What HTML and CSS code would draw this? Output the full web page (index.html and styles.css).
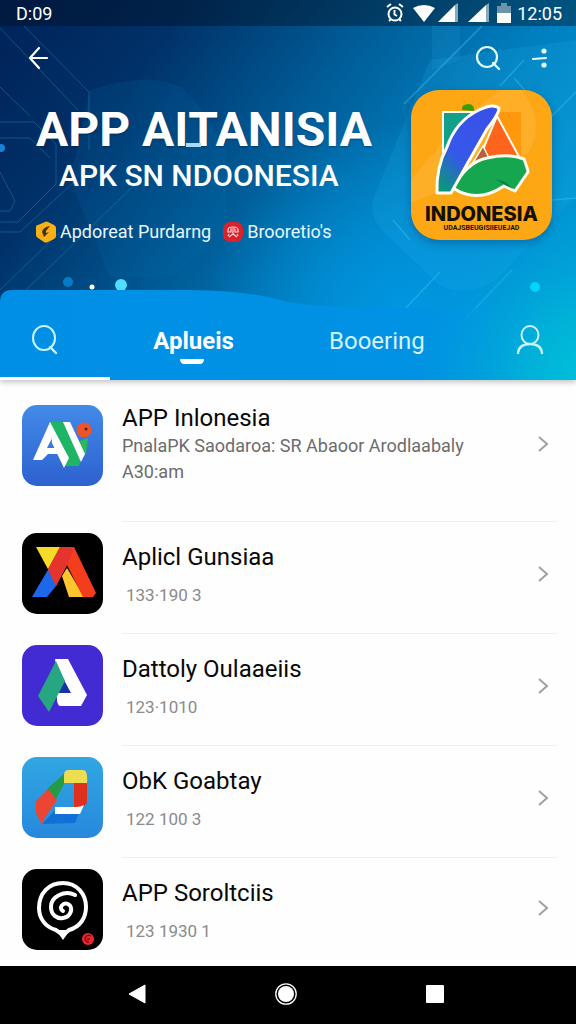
FILE: index.html
```html
<!DOCTYPE html>
<html lang="id">
<head>
  <meta charset="utf-8">
  <meta name="viewport" content="width=device-width, initial-scale=1">
  <title>APP Indonesia</title>
  <link rel="stylesheet" href="styles.css">
</head>
<body>
  <header class="header">
    <svg class="backdrop" viewBox="0 0 576 380" preserveAspectRatio="none" aria-hidden="true">
      <defs>
        <linearGradient id="sky" x1="0" y1="0.1" x2="1" y2="0.6">
          <stop offset="0" stop-color="#00245a"/>
          <stop offset="0.22" stop-color="#003168"/>
          <stop offset="0.5" stop-color="#005d98"/>
          <stop offset="0.75" stop-color="#0080c0"/>
          <stop offset="1" stop-color="#0098d6"/>
        </linearGradient>
        <radialGradient id="glow" gradientUnits="userSpaceOnUse" cx="410" cy="330" r="210">
          <stop offset="0" stop-color="#0098e4"/>
          <stop offset="0.4" stop-color="#0094de" stop-opacity="0.7"/>
          <stop offset="1" stop-color="#0090d8" stop-opacity="0"/>
        </radialGradient>
        <radialGradient id="teal" gradientUnits="userSpaceOnUse" cx="600" cy="380" r="180">
          <stop offset="0" stop-color="#00c6dc"/>
          <stop offset="0.4" stop-color="#00b8d8" stop-opacity="0.8"/>
          <stop offset="1" stop-color="#00a0dc" stop-opacity="0"/>
        </radialGradient>
        <linearGradient id="panel" x1="0" y1="0" x2="1" y2="0">
          <stop offset="0" stop-color="#008fe6"/>
          <stop offset="0.7" stop-color="#0092e4"/>
          <stop offset="1" stop-color="#0096de" stop-opacity="0"/>
        </linearGradient>
      </defs>
      <rect width="576" height="380" fill="url(#sky)"/>
      <rect width="576" height="380" fill="url(#glow)"/>
      <path d="M90 90Q150 70 182 88Q200 104 226 148V210Q226 222 216 234L184 268Q174 277 164 277H110L70 180Z" fill="#0077b5" opacity="0.14"/>
      <path d="M430 60L376 192Q366 212 382 230L440 286Q470 300 500 276L576 196V40Z" fill="#25b4ea" opacity="0.16"/>
      <path d="M432 26V70L460 60V26Z" fill="#39b5ec" opacity="0.12"/>
      <g fill="none" stroke="#2187bd" stroke-width="1" opacity="0.45">
        <path d="M24 26L89 92V150"/>
        <path d="M0 28L78 110M0 87L30 116"/>
        <path d="M0 122H34L56 144V184L18 222H0"/>
        <path d="M0 138H30L50 158M0 172L15 201L10 211H0"/>
        <path d="M0 232H20L76 180M26 290L150 170M0 290L60 232"/>
      </g>
      <g fill="none" stroke="#38c4f3" stroke-width="1.500" opacity="0.45">
        <path d="M482 26L404 104M576 92L550 118M552 200L576 198"/>
        <path d="M524 60L500 86M514 78L530 96M393 220L410 240"/>
        <path d="M440 272L402 312M512 270L466 318"/>
      </g>
      <circle cx="1" cy="148" r="4" fill="#1a80d4"/>
      <circle cx="68" cy="282" r="5" fill="#087bc7"/>
      <circle cx="92" cy="287" r="2.500" fill="#fff"/>
      <circle cx="121" cy="285" r="6" fill="#50ddff"/>
      <path d="M0 302Q0 290 12 290H190Q250 291 280 300Q310 308 390 308H576V380H0Z" fill="url(#panel)"/>
      <rect width="576" height="380" fill="url(#teal)"/>
      <circle cx="535" cy="287" r="5" fill="#00d4fc"/>
    </svg>

    <div class="statusbar">
      <span>D:09</span>
      <span class="status-icons">
        <svg width="106" height="22" viewBox="0 0 106 22" aria-hidden="true">
          <circle cx="10" cy="12" r="6.500" fill="none" stroke="#fff" stroke-width="2"/>
          <path d="M2 5L6 2M18 5L14 2M4 19L6 17M16 19L14 17M9.500 8V12.500L12 14" fill="none" stroke="#fff" stroke-width="2"/>
          <path d="M28 6Q39 0 50 6L39 20Z" fill="#fff"/>
          <path d="M53 20L70 3V20Z" fill="#fff"/>
          <path d="M70 3L73 1V20H70Z" fill="#86a9bd"/>
          <path d="M83 20L101 3V20Z" fill="#fff"/>
          <path d="M101 3L104 1V20H101Z" fill="#86a9bd"/>
        </svg>
        <svg width="14" height="20" viewBox="0 0 14 20" aria-hidden="true">
          <path d="M4 0H10V3H14V10H0V3H4Z" fill="#6d93aa"/>
          <path d="M0 10H14V20H0Z" fill="#fff"/>
        </svg>
        <span>12:05</span>
      </span>
    </div>

    <div class="toolbar">
      <button class="icon-button" aria-label="Back">
        <svg width="24" height="24" viewBox="0 0 24 24"><path d="M12 2L3 12L12 22M3 12H20" fill="none" stroke="#fff" stroke-width="2.200" stroke-linecap="round" stroke-linejoin="round"/></svg>
      </button>
      <div class="toolbar-actions">
        <button class="icon-button" aria-label="Search">
          <svg width="26" height="26" viewBox="0 0 26 26"><circle cx="12" cy="12" r="10" fill="none" stroke="#e4fbff" stroke-width="2.200"/><path d="M18 18L24 24" stroke="#e4fbff" stroke-width="2.400" stroke-linecap="round"/></svg>
        </button>
        <button class="icon-button" aria-label="More">
          <svg width="18" height="22" viewBox="0 0 18 22"><path d="M2 12L15 11" stroke="#e4fbff" stroke-width="2" stroke-linecap="round"/><circle cx="13" cy="4" r="2.600" fill="#e4fbff"/><circle cx="13" cy="18" r="2.600" fill="#e4fbff"/></svg>
        </button>
      </div>
    </div>

    <div class="hero">
      <div class="hero-text">
        <h1>APP A<span class="notch">I</span>TANISIA</h1>
        <h2>APK SN NDOONESIA</h2>
        <div class="badges">
          <span class="badge">
            <svg width="20" height="22" viewBox="0 0 20 22" aria-hidden="true"><path d="M9 1Q10 0 12 1L18 4Q20 5 20 7V15Q20 17 18 18L12 21Q10 22 8 21L2 17Q0 16 0 14V6Q0 4 2 4Z" fill="#fbb015"/><path d="M14 5Q7 6 6 11L8 16L13 11L10 12L10 10Z" fill="#41351b"/></svg>
            Apdoreat Purdarng
          </span>
          <span class="badge">
            <svg width="20" height="20" viewBox="0 0 20 20" aria-hidden="true"><rect width="20" height="20" rx="7" fill="#d9222b"/><path d="M5 8Q5 5 10 5Q15 5 15 8V10H12V7M5 8V10H8V7H12M10 8V12L6 15M10 12L14 15M6 12L5 14M14 12L15 14" fill="none" stroke="#ffd8dc" stroke-width="1.200"/></svg>
            Brooretio's
          </span>
        </div>
      </div>
      <div class="logo">
        <svg viewBox="0 0 141 114" aria-hidden="true">
          <path d="M0 90L50 30L90 0H110Q135 30 118 62L90 80L0 112Z" fill="#ffc45a" opacity="0.3"/>
          <path d="M80 22H110V68L80 40Z" fill="#ff980c"/>
          <path d="M32 22H66L50 62H32Z" fill="#13a08b" stroke="#fffdf0" stroke-width="2"/>
          <path d="M51 20Q50 14 58 14Q64 15 63 21Z" fill="#3a9e0c"/>
          <path d="M86 26L113 76H65Z" fill="#ff641d" stroke="#fffdf0" stroke-width="2"/>
          <path d="M72 56L82 76H60Z" fill="#b8603a" stroke="#fffdf0" stroke-width="1.500"/>
          <defs><linearGradient id="leaf" x1="0.8" y1="0" x2="0.1" y2="1"><stop offset="0" stop-color="#3950e8"/><stop offset="0.6" stop-color="#3658ea"/><stop offset="1" stop-color="#079b72"/></linearGradient></defs>
          <path d="M42 98Q56 72 76 68Q98 63 113 69Q117 80 117 82L104 101L93 96Q66 114 42 98Z" fill="#16a650" stroke="#fffdf0" stroke-width="3" stroke-linejoin="round"/>
          <path d="M84 89L96 96L102 99L94 92Z" fill="#087f3d"/>
          <path d="M26 103Q25 77 36 57Q45 31 68 20Q82 13 88 18Q88 24 76 39L55 76L40 103Z" fill="url(#leaf)" stroke="#fffdf0" stroke-width="3" stroke-linejoin="round"/>
        </svg>
        <strong>INDONESIA</strong>
        <small>UDAJSBEUGISIIEUEJAD</small>
      </div>
    </div>

    <nav class="tabs">
      <button class="icon-button" aria-label="Search apps">
        <svg width="28" height="30" viewBox="0 0 28 30"><ellipse cx="14" cy="13" rx="11" ry="12" fill="none" stroke="#c8f5ff" stroke-width="2"/><path d="M20 22L26 28" stroke="#c8f5ff" stroke-width="2.400" stroke-linecap="round"/></svg>
      </button>
      <a href="#apps" class="tab active">Aplueis</a>
      <a href="#booering" class="tab">Booering</a>
      <button class="icon-button" aria-label="Profile">
        <svg width="28" height="30" viewBox="0 0 28 30"><ellipse cx="14" cy="10" rx="8.500" ry="9" fill="none" stroke="#c8f5ff" stroke-width="2"/><path d="M2 28Q3 19 14 19Q25 19 26 28" fill="none" stroke="#c8f5ff" stroke-width="2.400" stroke-linecap="round"/></svg>
      </button>
    </nav>
  </header>

  <main class="list" id="apps">
    <a href="#app1" class="item featured">
      <svg class="app-icon" viewBox="0 0 81 81" aria-hidden="true">
        <defs><linearGradient id="blue1" x1="0" y1="0" x2="0" y2="1"><stop offset="0" stop-color="#438ae8"/><stop offset="1" stop-color="#2d61cf"/></linearGradient></defs>
        <rect width="81" height="81" rx="15" fill="url(#blue1)"/>
        <path d="M11 55L28 17H35L44 49H26L20 55Z" fill="#fff"/>
        <path d="M32 29L25 43H37Z" fill="#3a78dc"/>
        <path d="M58 36L66 33L64 48L60 52L53 38Z" fill="#28bb55"/>
        <path d="M28 17H41L60 52L57 61H44Z" fill="#1fb566"/>
        <path d="M28 17L47 53L42 63L30 38Z" fill="#fff"/>
        <path d="M41 17H48L63 49L59 57Z" fill="#fff"/>
        <circle cx="62" cy="25" r="7.500" fill="#ef5429"/>
        <circle cx="64" cy="24" r="1.500" fill="#561d1c"/>
      </svg>
      <div class="item-body">
        <div class="item-text">
          <h3>APP Inlonesia</h3>
          <p>PnalaPK Saodaroa: SR Abaoor Arodlaabaly A30:am</p>
        </div>
        <svg class="chevron" viewBox="0 0 12 18"><path d="M2 2L10 9L2 16"/></svg>
      </div>
    </a>

    <a href="#app2" class="item">
      <svg class="app-icon" viewBox="0 0 81 81" aria-hidden="true">
        <rect width="81" height="81" rx="15" fill="#000"/>
        <path d="M14 14H38L27 38Z" fill="#f4dc28"/>
        <path d="M27 35L34 53L25 64H10Z" fill="#1d68ea"/>
        <path d="M40 43L45 35L62 64H47Z" fill="#ffc52f"/>
        <path d="M38 14H52L74 60L71 64H61L45 32L34 53L26 36Z" fill="#f43d1c"/>
        <path d="M52 14L45 32L34 53L26 36L38 14Z" fill="#e4342d"/>
      </svg>
      <div class="item-body">
        <div class="item-text">
          <h3>Aplicl Gunsiaa</h3>
          <p>133·190 3</p>
        </div>
        <svg class="chevron" viewBox="0 0 12 18"><path d="M2 2L10 9L2 16"/></svg>
      </div>
    </a>

    <a href="#app3" class="item">
      <svg class="app-icon" viewBox="0 0 81 81" aria-hidden="true">
        <rect width="81" height="81" rx="15" fill="#422bd3"/>
        <path d="M34 48L42 35L49 49Z" fill="#1635a4"/>
        <path d="M33 14H46L65 50L59 61H38Q34 60 35 48H49L34 20Z" fill="#fff"/>
        <path d="M34 16L43 36L27 67L16 51Z" fill="#27a682"/>
      </svg>
      <div class="item-body">
        <div class="item-text">
          <h3>Dattoly Oulaaeiis</h3>
          <p>123·1010</p>
        </div>
        <svg class="chevron" viewBox="0 0 12 18"><path d="M2 2L10 9L2 16"/></svg>
      </div>
    </a>

    <a href="#app4" class="item">
      <svg class="app-icon" viewBox="0 0 81 81" aria-hidden="true">
        <defs><linearGradient id="blue2" x1="0" y1="0" x2="0" y2="1"><stop offset="0" stop-color="#30a7e2"/><stop offset="1" stop-color="#2788dc"/></linearGradient></defs>
        <rect width="81" height="81" rx="15" fill="url(#blue2)"/>
        <path d="M20 67L35 51H59L53 66Z" fill="#126fd7"/>
        <path d="M44 15L42 27L33 44L24 33Z" fill="#259b48"/>
        <path d="M26 32L35 43L22 62L20 68L14 56V44Z" fill="#ec4534"/>
        <path d="M52 25H65V43Q65 50 59 50H52Z" fill="#df301d"/>
        <path d="M42 18Q42 13 47 13H61Q66 13 65 26H42Z" fill="#eedc51"/>
        <path d="M33 50H54Q59 50 62 48L58 57H33Z" fill="#fff"/>
      </svg>
      <div class="item-body">
        <div class="item-text">
          <h3>ObK Goabtay</h3>
          <p>122 100 3</p>
        </div>
        <svg class="chevron" viewBox="0 0 12 18"><path d="M2 2L10 9L2 16"/></svg>
      </div>
    </a>

    <a href="#app5" class="item">
      <svg class="app-icon" viewBox="0 0 81 81" aria-hidden="true">
        <rect width="81" height="81" rx="15" fill="#000"/>
        <path d="M34 61C23 58 17 49 17 39C17 24 27 14 41 14C55 14 64 25 64 38C64 49 58 58 47 61L41 66Z" fill="none" stroke="#fff" stroke-width="4"/>
        <path d="M34 61L41 71L48 61Z" fill="#fff"/>
        <path d="M53 26C43 21 29 27 29 38C29 46 35 50 41 49C49 48 52 38 46 35C41 33 36 39 41 42" fill="none" stroke="#fff" stroke-width="4" stroke-linecap="round"/>
        <circle cx="66" cy="70" r="6" fill="#ec2931"/>
        <path d="M69 67Q65 65 63 69Q63 73 67 73M65 70H68" fill="none" stroke="#7d0a14" stroke-width="1.500"/>
      </svg>
      <div class="item-body">
        <div class="item-text">
          <h3>APP Soroltciis</h3>
          <p>123 1930 1</p>
        </div>
        <svg class="chevron" viewBox="0 0 12 18"><path d="M2 2L10 9L2 16"/></svg>
      </div>
    </a>
  </main>

  <footer class="navbar">
    <button class="icon-button" aria-label="Back">
      <svg width="18" height="20" viewBox="0 0 18 20"><path d="M17 1V19L1 10Z" fill="#fff" stroke="#fff" stroke-linejoin="round"/></svg>
    </button>
    <button class="icon-button" aria-label="Home">
      <svg width="22" height="22" viewBox="0 0 22 22"><circle cx="11" cy="11" r="10.200" fill="none" stroke="#fff" stroke-width="1.300"/><circle cx="11" cy="11" r="8" fill="#fff"/></svg>
    </button>
    <button class="icon-button" aria-label="Recent apps">
      <svg width="18" height="18" viewBox="0 0 18 18"><rect width="18" height="18" rx="1" fill="#fff"/></svg>
    </button>
  </footer>
</body>
</html>
```

FILE: styles.css
```css
* {
  box-sizing: border-box;
}

body {
  margin: 0;
  min-height: 100vh;
  display: flex;
  flex-direction: column;
  background-color: #fefefe;
  color: #080808;
  font-family: Roboto, Arial, sans-serif;
}

h1, h2, h3, p {
  margin: 0;
}

a {
  color: inherit;
  text-decoration: none;
}

svg {
  display: block;
  flex: none;
}

.icon-button {
  padding: 0;
  border: none;
  background: none;
  cursor: pointer;
}

/* header */
.header {
  position: relative;
  z-index: 1;
  color: #fff;
  background-color: #005d98;
  box-shadow: 0 2px 6px rgba(0, 0, 0, 0.25);
}

.backdrop {
  position: absolute;
  top: 0;
  left: 0;
  width: 100%;
  height: 100%;
  z-index: -1;
}

.statusbar {
  display: flex;
  justify-content: space-between;
  align-items: center;
  height: 26px;
  padding: 0 14px 0 16px;
  background-color: rgba(0, 12, 28, 0.4);
  font-size: 18px;
}

.status-icons {
  display: flex;
  align-items: center;
  gap: 6px;
}

.toolbar {
  display: flex;
  justify-content: space-between;
  align-items: center;
  height: 64px;
  padding: 0 27px;
}

.toolbar-actions {
  display: flex;
  align-items: center;
  gap: 30px;
}

.hero {
  display: flex;
  justify-content: space-between;
  height: 200px;
  padding: 0 24px 0 36px;
}

.hero-text {
  padding-top: 12px;
  white-space: nowrap;
}

.hero h1 {
  font-size: 48px;
  line-height: 56px;
  font-weight: 700;
  text-shadow: 0 1px 2px rgba(0, 20, 60, 0.4);
}

.hero h2 {
  padding-left: 23px;
  font-size: 30px;
  line-height: 36px;
  font-weight: 500;
}

/* small bar that joins the I and the T */
.notch {
  position: relative;
}

.notch::after {
  content: "";
  position: absolute;
  left: 12px;
  bottom: 11px;
  width: 15px;
  height: 4px;
  background-color: #a9d8f6;
}

.badges {
  display: flex;
  gap: 12px;
  margin-top: 26px;
}

.badge {
  display: flex;
  align-items: center;
  gap: 4px;
  font-size: 18px;
  line-height: 24px;
  color: #e8f7ff;
}

.logo {
  display: flex;
  flex-direction: column;
  align-items: center;
  flex: none;
  width: 141px;
  height: 150px;
  overflow: hidden;
  border-radius: 28px;
  background-color: #fda714;
  box-shadow: 0 3px 8px rgba(0, 40, 90, 0.35);
  color: #141008;
}

.logo svg {
  width: 100%;
}

.logo strong {
  font-family: Inter, Arial, sans-serif;
  font-size: 20px;
  line-height: 20px;
  font-weight: 800;
}

.logo small {
  font-size: 7px;
  line-height: 8px;
  font-weight: 700;
}

/* tabs */
.tabs {
  position: relative;
  display: flex;
  justify-content: space-between;
  align-items: center;
  height: 90px;
  padding: 10px 32px 0 30px;
}

.tabs::after {
  content: "";
  position: absolute;
  left: 0;
  bottom: 0;
  width: 110px;
  height: 3px;
  background-color: #fff;
}

.tab {
  position: relative;
  padding: 2px 0 0 4px;
  font-size: 24px;
  line-height: 28px;
  color: #d5f3ff;
}

.tab.active {
  font-weight: 700;
  color: #fff;
}

.tab.active::after {
  content: "";
  position: absolute;
  left: 50%;
  bottom: -9px;
  width: 24px;
  height: 5px;
  margin-left: -12px;
  border-radius: 2px 2px 10px 10px;
  background-color: #fff;
}

/* app list */
.list {
  flex: 1;
}

.item {
  display: flex;
  gap: 19px;
  padding: 0 19px 0 22px;
}

.app-icon {
  width: 81px;
  height: 81px;
  margin-top: 11px;
}

.item-body {
  flex: 1;
  display: flex;
  justify-content: space-between;
  align-items: center;
  min-height: 112px;
  padding-right: 8px;
  border-bottom: 1px solid #efefef;
}

.item:last-child .item-body {
  min-height: 108px;
  border-bottom: none;
}

.item-text {
  flex: 1;
  align-self: flex-start;
  padding-top: 20px;
}

.item h3 {
  font-size: 24px;
  line-height: 30px;
  font-weight: 400;
}

.item p {
  margin-top: 10px;
  padding-left: 4px;
  font-size: 17px;
  line-height: 26px;
  color: #8a8a8a;
}

.featured .app-icon {
  margin-top: 25px;
}

.featured .item-body {
  min-height: 142px;
}

.featured .item-text {
  padding-top: 23px;
}

.featured p {
  max-width: 370px;
  margin-top: 0;
  padding-left: 0;
  font-size: 18px;
  color: #6c6c6c;
}

.chevron {
  width: 12px;
  height: 18px;
  margin-bottom: 8px;
  fill: none;
  stroke: #a0a0a0;
  stroke-width: 2;
}

.featured .chevron {
  margin-bottom: 14px;
}

/* system navigation */
.navbar {
  display: flex;
  justify-content: space-around;
  align-items: center;
  height: 58px;
  padding: 0 68px 2px 64px;
  background-color: #000;
}
```
